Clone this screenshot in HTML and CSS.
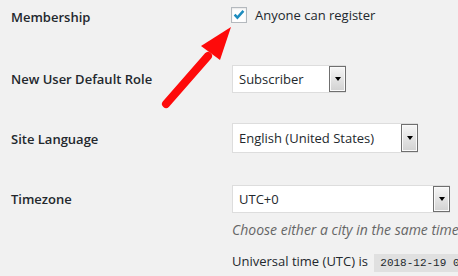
FILE: index.html
```html
<!DOCTYPE html>
<html lang="en">
<head>
  <meta charset="UTF-8">
  <meta name="viewport" content="width=device-width, initial-scale=1.0">
  <title>General Settings</title>
  <link rel="stylesheet" href="styles.css">
</head>
<body>

  <div class="settings">
    <div class="row row-membership">
      <div class="row-label">Membership</div>
      <div class="row-field">
        <label class="check">
          <span class="checkbox">
            <svg width="14" height="14" viewBox="0 0 14 14"><path d="M2.6 6.6 L5.4 9.6 L11.4 2.8" fill="none" stroke="#1e8cbe" stroke-width="2.5"/></svg>
          </span>
          Anyone can register
        </label>
      </div>
    </div>

    <div class="row row-role">
      <div class="row-label">New User Default Role</div>
      <div class="row-field">
        <div class="select select-role">
          <span class="select-value">Subscriber</span>
          <span class="select-btn"></span>
        </div>
      </div>
    </div>

    <div class="row row-language">
      <div class="row-label">Site Language</div>
      <div class="row-field">
        <div class="select select-language">
          <span class="select-value">English (United States)</span>
          <span class="select-btn"></span>
        </div>
      </div>
    </div>

    <div class="row row-timezone">
      <div class="row-label">Timezone</div>
      <div class="row-field">
        <div class="select select-timezone">
          <span class="select-value">UTC+0</span>
          <span class="select-btn"></span>
        </div>
        <p class="description">Choose either a city in the same timezone as you or a UTC timezone offset.</p>
        <p class="utc">Universal time (UTC) is <code>2018-12-19 06:24:31</code></p>
      </div>
    </div>
  </div>

  <!-- annotation arrow over the screenshot -->
  <svg class="arrow" width="458" height="276" viewBox="0 0 458 276">
    <line x1="166" y1="104" x2="208" y2="56" stroke="#fe0a0a" stroke-width="8" stroke-linecap="round"/>
    <polygon points="231,27 201,46 220,60" fill="#fe0a0a"/>
  </svg>

</body>
</html>
```

FILE: styles.css
```css
html,
body {
  margin: 0;
  height: 100%;
  overflow: hidden;
}

body {
  background-color: #f1f1f1;
  color: #23282d;
  font-family: "Open Sans", sans-serif;
  font-size: 13px;
  line-height: 18px;
  padding: 0 11px;
  position: relative;
}

.row {
  display: flex;
  align-items: flex-start;
  padding: 15px 0;
}

.row-membership {
  padding: 6px 0 24px;
}

.row-timezone {
  padding-top: 17px;
}

.row-label {
  width: 221px;
  flex-shrink: 0;
  font-weight: 600;
  padding-top: 5px;
}

.row-membership .row-label {
  padding-top: 2px;
}

.row-language .row-label {
  padding-top: 7px;
}

.row-field {
  flex: 1;
  min-width: 0;
}

.check {
  display: flex;
  align-items: center;
  gap: 8px;
  white-space: nowrap;
  margin-left: -1px;
}

.checkbox {
  width: 14px;
  height: 14px;
  border: 1px solid #b4b9be;
  background-color: #fff;
  box-shadow: inset 0 1px 2px rgba(0, 0, 0, 0.1);
  display: flex;
}

.select {
  display: flex;
  height: 28px;
  box-sizing: border-box;
  border: 1px solid #ddd;
  background-color: #fff;
}

.select-role {
  width: 114px;
}

.select-language {
  width: 186px;
  height: 30px;
}

.select-timezone {
  width: 218px;
}

.select-value {
  flex: 1;
  padding: 0 6px;
  line-height: 26px;
  white-space: nowrap;
}

.select-language .select-value {
  line-height: 28px;
}

.select-btn {
  width: 15px;
  margin-right: -1px;
  border: 1px solid #6f6f6f;
  background: linear-gradient(#f6f6f6, #d2d2d2);
  box-shadow: inset 0 0 0 1px #fafafa;
  display: flex;
  align-items: center;
  justify-content: center;
}

.select-btn::after {
  content: "";
  border-left: 3px solid transparent;
  border-right: 3px solid transparent;
  border-top: 4px solid #000;
}

.description {
  margin: 6px 0 0;
  color: #666;
  font-size: 14px;
  font-style: italic;
  line-height: 21px;
  white-space: nowrap;
}

.utc {
  margin: 11px 0 0;
  line-height: 21px;
  white-space: nowrap;
}

code {
  font-family: "Liberation Mono", monospace;
  font-size: 11px;
  padding: 3px 6px;
  margin-left: 3px;
  background-color: rgba(0, 0, 0, 0.07);
}

.arrow {
  position: absolute;
  left: 0;
  top: 0;
  pointer-events: none;
}
```
